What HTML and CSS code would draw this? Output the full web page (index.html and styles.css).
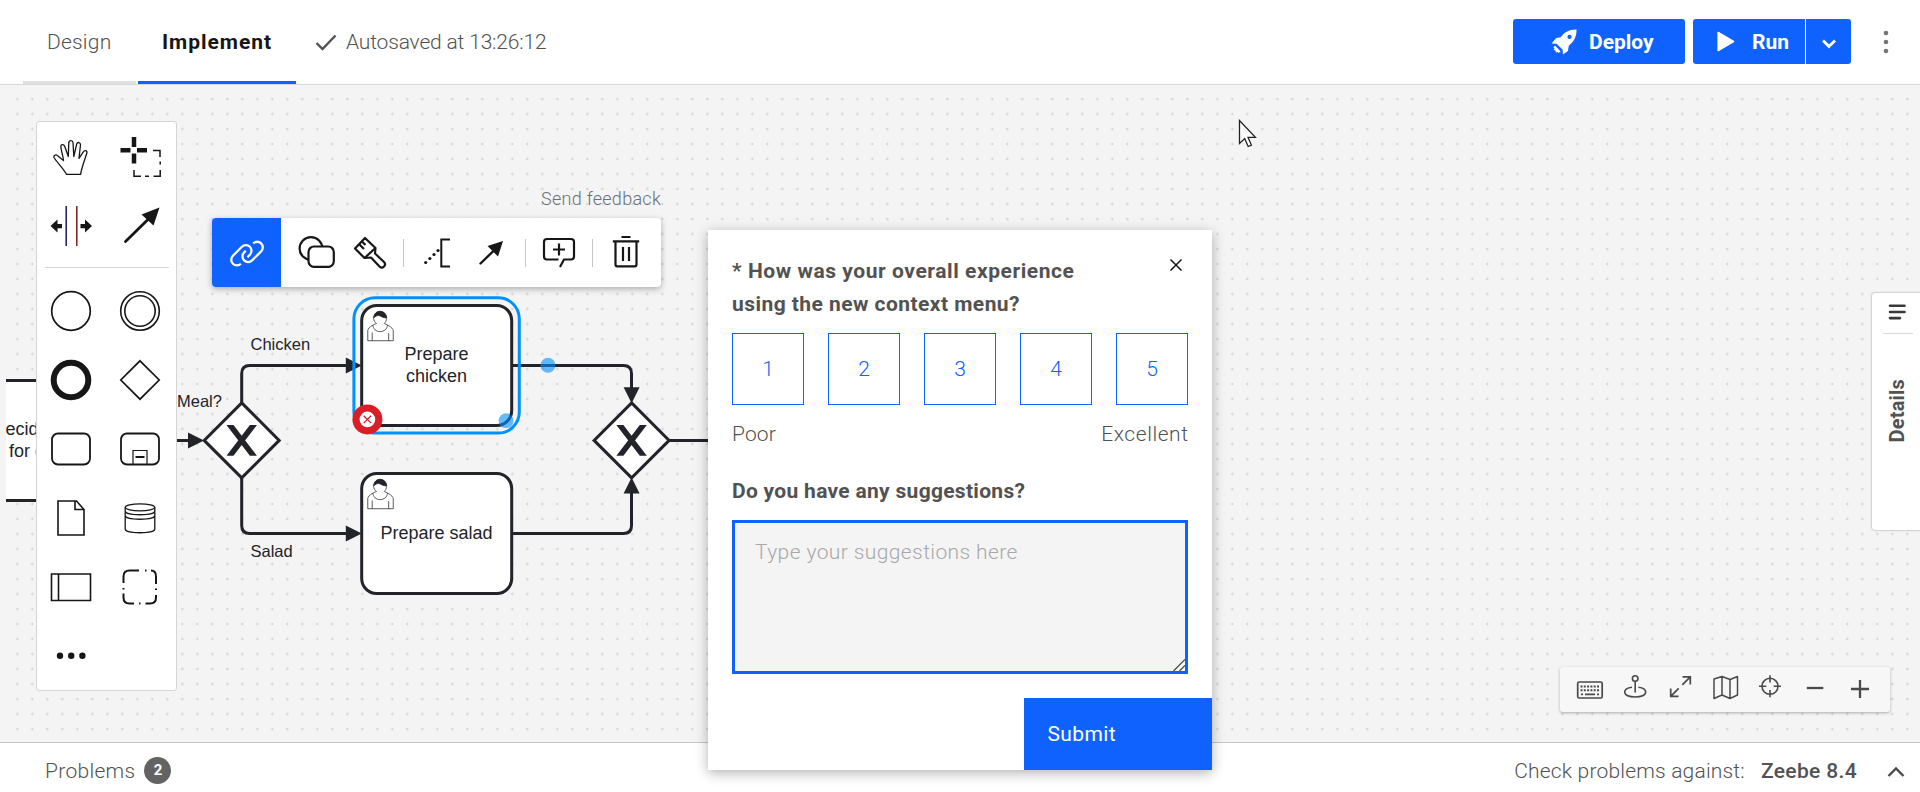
FILE: index.html
```
<!DOCTYPE html>
<html lang="en">
<head>
<meta charset="utf-8">
<title>Modeler</title>
<link rel="stylesheet" href="styles.css">
</head>
<body>
<header class="topbar">
  <nav class="tabs">
    <a class="tab tab-design"><span class="t-design">Design</span></a>
    <a class="tab tab-implement"><span class="t-implement">Implement</span></a>
  </nav>
  <div class="autosave">
    <svg class="check" width="22" height="20" viewBox="0 0 22 20"><path d="M1.5 11 7.5 17 20.500 3.500" fill="none" stroke="#525252" stroke-width="2.4"/></svg>
    <span class="t-autosave">Autosaved at 13:26:12</span>
  </div>
  <div class="actions">
    <button class="btn btn-deploy">
      <svg width="26" height="26" viewBox="0 0 26 26"><path fill="#fff" fill-rule="evenodd" d="M25.500.5C18 .3 13 3.500 9.700 8.300L5.200 9 .6 14.600l5 .2 6.100 6 .2 4.700 5-3.600.9-5.200C23 12.500 25.800 7.500 25.500.5zM18.500 5.800a2.100 2.100 0 1 1 0 4.200 2.100 2.100 0 0 1 0-4.200z"/><path d="M4 16.500 2.400 18.500l1.200 1.200-1.100 1.400 2 .4.500 2.200 1.500-1 1 1.300 2.100-1.500z" fill="#fff"/></svg>
      <span class="t-deploy">Deploy</span>
    </button>
    <div class="split">
      <button class="btn btn-run">
        <svg width="18" height="21" viewBox="0 0 18 21"><path d="M1.200 1.500v18L16.500 10.500z" fill="#fff" stroke="#fff" stroke-width="1.600" stroke-linejoin="round"/></svg>
        <span class="t-run">Run</span>
      </button>
      <button class="btn btn-more"><svg width="16" height="10" viewBox="0 0 16 10"><path d="M2 1.500 8 7.500 14 1.500" fill="none" stroke="#fff" stroke-width="2.800"/></svg></button>
    </div>
    <svg class="kebab" width="6" height="24" viewBox="0 0 6 24" fill="#757575"><circle cx="3" cy="3" r="2.300"/><circle cx="3" cy="12" r="2.300"/><circle cx="3" cy="21" r="2.300"/></svg>
  </div>
</header>

<main class="canvas">
  <svg class="diagram" width="1920" height="657" viewBox="0 85 1920 657">
    <defs>
      <pattern id="dots" x="-5.200" y="91.500" width="15" height="15" patternUnits="userSpaceOnUse"><circle cx="7.500" cy="7.500" r="1.100" fill="#c6c6c6"/></pattern>
      <g id="gateway">
        <path d="M0-37.500 37.500 0 0 37.500-37.500 0z" fill="#fff" stroke="#22242a" stroke-width="3"/>
        <path transform="scale(1.5) translate(-25.140 -24.700)" d="m16 15 7.430 9.710-7.430 9.710h3.430l5.710-7.460 5.710 7.460h3.430l-7.430-9.710 7.430-9.710h-3.430l-5.710 7.460-5.710-7.460z" fill="#22242a" stroke="#22242a" stroke-width="1"/>
      </g>
      <g id="task">
        <rect width="150" height="120" rx="15" fill="#fff" stroke="#22242a" stroke-width="3"/>
        <g transform="scale(1.5)" fill="#fff" stroke="#22242a" stroke-width=".5">
          <path d="m15 12c.909-.845 1.594-2.049 1.594-3.385 0-2.554-1.805-4.622-4.357-4.622-2.552 0-4.288 2.068-4.288 4.622 0 1.348.974 2.562 1.896 3.405-.529.187-5.669 2.097-5.794 4.756v6.718h17v-6.718c0-2.298-5.528-4.595-6.051-4.776zm-8 6v5.500m11 0v-5"/>
          <path d="m17.162 13.009c0 2.447-2.158 4.431-4.821 4.431-2.663 0-4.822-1.981-4.822-4.431"/>
          <path d="m8.100 8.200c0 0 2.251-2.358 4.274-1.177 2.024 1.181 4.221 1.537 4.124.965-.098-.57-.117-3.791-4.191-4.136-3.575.001-4.208 3.367-4.207 4.348z" fill="#22242a"/>
        </g>
      </g>
    </defs>
    <rect x="15" y="92" width="1905" height="650" fill="url(#dots)"/>
    <rect x="6" y="380" width="40" height="120" fill="#fff"/>
    <path d="M6 380.400h40M6 500.400h40" stroke="#22242a" stroke-width="3"/>
    <g class="flows" fill="none" stroke="#22242a" stroke-width="3">
      <path d="M170 440.400h24M241.700 403v-29.500q0-8 8-8H350M241.700 478v47.500q0 8 8 8H350M512 365.500h111.500q8 0 8 8V392M512 533.500h111.500q8 0 8-8V490M669 440.400h60"/>
    </g>
    <path fill="#22242a" d="M188 432.400v16l16-8zM345.800 357.500v16l16-8zM345.800 525.500v16l16-8zM623.600 387.300h16l-8 16zM623.600 493.400h16l-8-16z"/>
    <use href="#gateway" x="241.700" y="440.400"/>
    <use href="#gateway" x="631.600" y="440.400"/>
    <rect x="353.900" y="297.800" width="165.400" height="135.200" rx="21" fill="none" stroke="#0090ff" stroke-width="3"/>
    <use href="#task" x="361.700" y="305.500"/>
    <use href="#task" x="361.700" y="473.500"/>
    <g class="node-text">
      <text x="5.500" y="435">ecide</text>
      <text x="9" y="457">for d</text>
      <text x="436.500" y="360" text-anchor="middle">Prepare</text>
      <text x="436.500" y="382" text-anchor="middle">chicken</text>
      <text x="436.500" y="539" text-anchor="middle">Prepare salad</text>
    </g>
    <g class="flow-text">
      <text x="177" y="407">Meal?</text>
      <text x="250.500" y="350">Chicken</text>
      <text x="250.500" y="557">Salad</text>
    </g>
    <circle cx="506" cy="420.700" r="7.400" fill="#0090ff" opacity=".6"/>
    <circle cx="548" cy="365.200" r="7.500" fill="#0090ff" opacity=".6"/>
    <circle cx="367.400" cy="419.400" r="15" fill="#da1e28"/>
    <circle cx="367.400" cy="419.400" r="7.800" fill="#fff"/>
    <path d="m363.700 415.700 7.400 7.400m0-7.400-7.400 7.400" stroke="#da1e28" stroke-width="1.300"/>
  </svg>

  <aside class="palette">
    <div class="tools">
      <svg viewBox="0 1 46 46"><path d="M18.500 41.400 C15.500 35.500 9 29.500 6 24.500 c-.8-2.600 2.600-3.500 4.200-1.300 l5.300 4.400 c-.3-5-2.500-10-2.700-14.400 .5-2.500 3.300-2 4 .3 l3.500 10 L20.800 9.500 c.6-2.600 3.800-2.400 4.200 0 l.8 14 L28.700 11 c.8-2.300 3.800-1.800 3.800.8 l-1.500 13.500 4.300-6.500 c1.300-2.200 4.300-1.200 3.500 1.400 C36.300 28 33.500 35 32.600 41.400z" fill="none" stroke="#161616" stroke-width="1.300" stroke-linejoin="round"/></svg>
      <svg viewBox="0 1 46 46"><path d="M17 4v10M17 20.500v10M3.500 17.200h10M20 17.200h10" stroke="#161616" stroke-width="4.500"/><path d="M36 17.500h7V24M43.200 28.500v3M43.200 37v6.200H36.500M32 43.200h-4M24 43.200h-7V37" fill="none" stroke="#161616" stroke-width="1.500"/></svg>
      <svg viewBox="0 0 46 46"><path d="M18.200 3v40" stroke="#19195e" stroke-width="1.500"/><path d="M28.800 3v40" stroke="#7a1f1f" stroke-width="1.500"/><path fill="#161616" d="M2.500 23 9.500 16.500V21H14v4.200H9.500v4.300zM44 23 37 16.500V21h-4.500v4.200H37v4.300z"/></svg>
      <svg viewBox="0 0 46 46"><path d="M8.500 38.500 33 14.500" stroke="#161616" stroke-width="2.800" stroke-linecap="round"/><path d="M42.500 4.500 36.500 22.500 24.500 11.500z" fill="#161616"/></svg>
    </div>
    <hr class="palette-rule">
    <div class="shapes">
      <svg viewBox="0 0 46 46"><circle cx="23" cy="23" r="19.300" fill="none" stroke="#161616" stroke-width="1.700"/></svg>
      <svg viewBox="0 0 46 46"><g fill="none" stroke="#161616" stroke-width="1.600"><circle cx="23" cy="23" r="19.300"/><circle cx="23" cy="23" r="15.200"/></g></svg>
      <svg viewBox="0 0 46 46"><circle cx="23" cy="23" r="17.300" fill="none" stroke="#161616" stroke-width="6"/></svg>
      <svg viewBox="0 0 46 46"><path d="M23 3.800 42.200 23 23 42.200 3.800 23z" fill="none" stroke="#161616" stroke-width="1.700"/></svg>
      <svg viewBox="0 0 46 46"><rect x="4" y="7.500" width="38" height="31" rx="6" fill="none" stroke="#161616" stroke-width="1.800"/></svg>
      <svg viewBox="0 0 46 46"><g fill="none" stroke="#161616"><rect x="4" y="7.500" width="38" height="31" rx="6" stroke-width="1.800"/><path d="M16 38V24.500h14V38" stroke-width="1.200"/><path d="M18.500 31h9" stroke-width="2"/></g></svg>
      <svg viewBox="0 0 46 46"><path d="M10 6h18.500l7.500 8.500V40H10zM27 6v8.500h9" fill="none" stroke="#161616" stroke-width="1.600"/></svg>
      <svg viewBox="0 0 46 46"><g fill="none" stroke="#161616" stroke-width="1.300"><ellipse cx="23" cy="12.300" rx="14.800" ry="3.500"/><path d="M8.200 12.300V34c0 5 29.600 5 29.600 0V12.300M8.200 16c0 5 29.600 5 29.600 0M8.200 20.500c0 5 29.600 5 29.600 0"/></g></svg>
      <svg viewBox="0 0 46 46"><path d="M3.500 10h39v26.500h-39zM10.500 10v26.500" fill="none" stroke="#161616" stroke-width="1.600"/></svg>
      <svg viewBox="0 0 46 46"><path d="M22 6.500H12.500q-6 0-6 6V19M6.500 24v1.500M6.500 29.500v4q0 6 6 6h4.500M22 39.500h1.500M28.500 39.500h4.500q6 0 6-6V31M39 26v-1.500M39 20v-7.500q0-6-5-6M29.500 6.500h-1.500" fill="none" stroke="#161616" stroke-width="2"/></svg>
      <svg viewBox="0 0 46 46" fill="#161616"><circle cx="12" cy="22.800" r="3.200"/><circle cx="23.200" cy="22.800" r="3.200"/><circle cx="34.400" cy="22.800" r="3.200"/></svg>
    </div>
  </aside>

  <a class="feedback-link">Send feedback</a>
  <div class="context-pad">
    <span class="pad-link"><svg width="36" height="36" viewBox="0 0 32 32" fill="#fff"><path d="M29.250 6.760a6 6 0 0 0-8.500 0l1.420 1.420a4 4 0 1 1 5.670 5.670l-8 8a4 4 0 1 1-5.670-5.660l1.410-1.420-1.410-1.420-1.420 1.420a6 6 0 0 0 0 8.500A6 6 0 0 0 17 25a6 6 0 0 0 4.270-1.760l8-8a6 6 0 0 0-.020-8.480z"/><path d="M4.190 24.820a4 4 0 0 1 0-5.670l8-8a4 4 0 0 1 5.670 0A3.940 3.940 0 0 1 19 14a4 4 0 0 1-1.170 2.850L15.710 19l1.420 1.420 2.120-2.120a6 6 0 0 0-8.510-8.510l-8 8a6 6 0 0 0 0 8.510A6 6 0 0 0 7 28a6.070 6.070 0 0 0 4.280-1.760l-1.420-1.420a4 4 0 0 1-5.670 0z"/></svg></span>
    <svg class="i-shapes" width="38" height="34" viewBox="0 0 38 34"><g fill="#fff" stroke="#161616" stroke-width="2.200"><circle cx="13" cy="13.500" r="11.400"/><rect x="10.500" y="11.500" width="25.300" height="20.300" rx="5.500"/></g></svg>
    <svg class="i-brush" width="34" height="34" viewBox="0 0 34 34" fill="none" stroke="#161616" stroke-width="2.200" stroke-linejoin="round"><path d="M12 2 22.500 12 22 17.500 31 26c3 3-1.500 7.500-4.500 4.500L18 21.500l-6.500.5L2 12.500z"/><path d="M22.500 12 11.500 22M9 5.500l3.500 3.500M6.500 8.500 11 13M13.500 5.500"/></svg>
    <i class="pad-sep"></i>
    <svg class="i-note" width="30" height="32" viewBox="0 0 30 32"><path d="M27 2.500H18.300V29.500H27" fill="none" stroke="#161616" stroke-width="2"/><g fill="#161616"><circle cx="2.700" cy="25.500" r="1.600"/><circle cx="6.900" cy="21.500" r="1.600"/><circle cx="11" cy="17.500" r="1.600"/><circle cx="15" cy="13.500" r="1.600"/></g></svg>
    <svg class="i-arrow" width="26" height="26" viewBox="0 0 26 26"><path d="M2.500 23.500 18 8.500" stroke="#161616" stroke-width="2.400" stroke-linecap="round"/><path d="M25 1 20 16.500 9.500 6z" fill="#161616"/></svg>
    <i class="pad-sep"></i>
    <svg class="i-comment" width="34" height="32" viewBox="0 0 34 32" fill="none" stroke="#161616" stroke-width="2.200"><path d="M16.500 22.500H5q-3 0-3-3V5q0-3 3-3h24q3 0 3 3v14.500q0 3-3 3h-7l-4 7.500M17 6.500v12M11 12.500h12"/></svg>
    <i class="pad-sep"></i>
    <svg class="i-trash" width="28" height="33" viewBox="0 0 28 33" fill="none" stroke="#161616" stroke-width="2.200"><path d="M9.500 2h9M.8 6.300h26.400M3.500 6.300V29.500q0 1.800 1.800 1.800h17.400q1.800 0 1.800-1.800V6.300M11 12v14M17 12v14"/></svg>
  </div>

  <aside class="details">
    <svg width="18" height="18" viewBox="0 0 18 18" stroke="#393939" stroke-width="2.600" stroke-linecap="round"><path d="M2 2.800h14.500M2 9h14.500M2 15.100h10"/></svg>
    <hr class="details-rule">
    <span class="t-details">Details</span>
  </aside>

  <div class="viewbar">
    <svg width="44" height="44" viewBox="-1.500 0 44 44" fill="none" stroke="#4a4a4a"><rect x="16.200" y="15" width="24.500" height="16" rx="1.500" stroke-width="1.700"/><path d="M19 19.500h18.500M19 23.300h18.500" stroke-width="2" stroke-dasharray="2 1.300"/><path d="M19.500 27.300h2M23.500 27.300h10M35.500 27.300h2" stroke-width="1.700"/></svg>
    <svg width="46" height="44" viewBox="0 0 46 44" fill="none" stroke="#4a4a4a" stroke-width="1.600"><circle cx="31.200" cy="11.500" r="2.800"/><path d="M31.200 14.300V25.500M28 20.300c-10.500 1-10 9.700 3.200 9.700s13.700-8.700 3.200-9.700"/></svg>
    <svg width="44" height="44" viewBox="0 0 44 44" fill="none" stroke="#4a4a4a" stroke-width="1.700"><path d="M32.500 9.800h7.800v7.800M40.300 9.800l-8 8M28.500 29.300h-7.800v-7.800M20.700 29.300l8-8"/></svg>
    <svg width="46" height="44" viewBox="0 0 46 44" fill="none" stroke="#4a4a4a" stroke-width="1.500" stroke-linejoin="round"><path d="m20 12 8-2.500 8 3 7.500-3V28l-7.500 3.500-8-3.500-8 3.500zM28 9.500V28M36 12.500v19"/></svg>
    <svg width="46" height="44" viewBox="0 0 46 44" fill="none" stroke="#4a4a4a" stroke-width="1.600"><circle cx="30" cy="19.300" r="8"/><path d="M30 8.200v7.300M30 23v7.300M19 19.300h7.300M33.700 19.300H41"/></svg>
    <svg width="44" height="44" viewBox="0 0 44 44"><path d="M20.800 21h16.500" stroke="#4a4a4a" stroke-width="2.300"/></svg>
    <svg width="46" height="44" viewBox="0 0 46 44"><path d="M21 22h18M30 13v18" stroke="#4a4a4a" stroke-width="2.300"/></svg>
  </div>

  <svg class="cursor" width="20" height="30" viewBox="0 0 20 30"><path d="M1.500 1.500v23l5.200-5 3.500 8 3.200-1.400-3.400-7.800h7.400z" fill="#fff" stroke="#222" stroke-width="1.300"/></svg>
</main>

<footer class="statusbar">
  <div class="problems"><span class="t-problems">Problems</span><b class="badge">2</b></div>
  <div class="target"><span class="t-check">Check problems against:</span><b class="t-zeebe">Zeebe 8.4</b>
    <svg width="18" height="12" viewBox="0 0 18 12"><path d="M1.500 10 9 2.500 16.500 10" fill="none" stroke="#4a4a4a" stroke-width="2.300"/></svg></div>
</footer>

<section class="survey">
  <div class="survey-body">
    <div class="survey-head">
      <h2><span class="t-q1">* How was your overall experience</span><br><span class="t-q2">using the new context menu?</span></h2>
      <svg class="close" width="14" height="14" viewBox="0 0 14 14"><path d="m1.500 1.500 11 11m0-11-11 11" stroke="#161616" stroke-width="1.500"/></svg>
    </div>
    <div class="scores"><button>1</button><button>2</button><button>3</button><button>4</button><button>5</button></div>
    <div class="scale"><span class="t-poor">Poor</span><span class="t-excellent">Excellent</span></div>
    <h3><span class="t-q3">Do you have any suggestions?</span></h3>
    <div class="suggestion">
      <span class="t-placeholder">Type your suggestions here</span>
      <svg class="grip" width="12" height="12" viewBox="0 0 12 12"><path d="M12 .5.5 12M12 6.500 6.500 12" stroke="#444" stroke-width="1.200"/></svg>
    </div>
  </div>
  <button class="submit"><span class="t-submit">Submit</span></button>
</section>
</body>
</html>
```
FILE: styles.css
```
* { box-sizing: border-box; }
body {
  margin: 0; width: 1920px; height: 792px; overflow: hidden; position: relative;
  display: flex; flex-direction: column;
  font: 300 21px/27px Roboto, "Open Sans", sans-serif; color: #525252; background: #fff;
}
svg { display: block; flex: none; }
button { font: inherit; border: 0; padding: 0; margin: 0; }
h2, h3 { margin: 0; font-size: 21px; font-weight: 700; }
span { white-space: nowrap; }

.topbar { height: 85px; flex: none; display: flex; align-items: stretch; border-bottom: 1px solid #d8d8d8; padding-left: 23px; }
.tabs { display: flex; gap: 2px; }
.tab { display: flex; padding: 29px 0 0 24px; border-bottom: 3px solid #e0e0e0; }
.tab-design { width: 113px; letter-spacing: .2px; }
.tab-implement { width: 158px; border-color: #0f62fe; color: #161616; font-weight: 700; letter-spacing: .95px; }
.autosave { display: flex; gap: 9px; padding: 29px 0 0 19px; letter-spacing: -.17px; }
.check { margin-top: 3px; }
.actions { margin-left: auto; display: flex; padding: 19px 31px 0 0; }
.btn { height: 45px; background: #0f62fe; color: #fff; font-weight: 700; display: flex; align-items: center; }
.btn span { padding-top: 2px; }
.btn-deploy { width: 172px; border-radius: 3px; padding-left: 38px; gap: 12px; margin-right: 8px; }
.split { display: flex; gap: 1px; }
.btn-run { width: 112px; border-radius: 3px 0 0 3px; padding-left: 24px; gap: 17px; }
.btn-more { width: 45px; border-radius: 0 3px 3px 0; justify-content: center; padding-top: 4px; }
.kebab { margin: 11px 0 0 32px; }

.canvas { height: 657px; flex: none; position: relative; background: #f4f4f4; overflow: hidden; }
.node-text { font: 400 18px "Liberation Sans", Arial, sans-serif; fill: #22242a; }
.flow-text { font: 400 16.5px "Liberation Sans", Arial, sans-serif; fill: #22242a; }

.palette { position: absolute; left: 36px; top: 36px; width: 141px; height: 570px; background: #fff; border: 1px solid #d4d4d4; border-radius: 3px; }
.tools, .shapes { display: grid; grid-template-columns: 69px 69px; grid-auto-rows: 69px; place-items: center; margin-left: -1px; }
.tools svg, .shapes svg { width: 46px; height: 46px; }
.palette-rule { border: 0; height: 1px; background: #d8d8d8; margin: 7px 7px 8px 8px; }

.feedback-link { position: absolute; left: 541px; top: 100px; font-size: 18px; letter-spacing: .28px; color: #697077; white-space: nowrap; }
.context-pad { position: absolute; left: 212px; top: 133px; width: 449px; height: 69px; display: flex; align-items: center; background: #fff; border-radius: 4px; box-shadow: 0 2px 6px rgba(0,0,0,.3); }
.pad-link { width: 69px; height: 69px; background: #0f62fe; border-radius: 4px 0 0 4px; display: flex; align-items: center; justify-content: center; }
.pad-sep { width: 1px; height: 28px; background: #c6c6c6; }
.i-shapes { margin: 0 0 2px 17px; }
.i-brush { margin: 0 16px 0 17px; }
.i-note { margin-left: 19px; }
.i-arrow { margin: 0 21px 0 25px; }
.i-comment { margin: 0 16px; }
.i-trash { margin: 0 0 3px 19px; }

.details { position: absolute; left: 1871px; top: 207px; width: 53px; height: 239px; background: #fff; border: 1px solid #d4d4d4; border-radius: 4px; padding: 10px 0 0 16px; box-shadow: 0 0 2px rgba(0,0,0,.1); }
.details-rule { border: 0; height: 1px; width: 30px; margin: 12px 0 45px -5px; background: #d8d8d8; }
.t-details { display: block; margin-left: -2px; writing-mode: vertical-rl; transform: rotate(180deg); font-size: 20px; font-weight: 700; line-height: 22px; letter-spacing: .2px; }

.viewbar { position: absolute; left: 1560px; top: 582px; width: 330px; height: 45px; display: flex; background: #f7f7f7; border-radius: 3px; box-shadow: 0 1px 3px rgba(0,0,0,.3); }
.cursor { position: absolute; left: 1238px; top: 34px; }

.statusbar { height: 50px; flex: none; display: flex; justify-content: space-between; border-top: 1px solid #c6c6c6; padding: 14px 15px 0 45px; }
.problems, .target { display: flex; }
.t-problems, .t-check, .t-zeebe { padding-top: 1px; }
.t-problems { letter-spacing: .3px; }
.t-check { letter-spacing: .19px; }
.badge { width: 27px; height: 27px; border-radius: 50%; background: #636363; color: #fff; font-size: 15px; font-weight: 700; text-align: center; margin-left: 9px; }
.target svg { margin: 9px 0 0 30px; }
.t-zeebe { font-weight: 500; margin-left: 16px; letter-spacing: .35px; }

.survey { position: absolute; left: 708px; top: 230px; width: 504px; height: 540px; background: #fff; box-shadow: 0 3px 12px rgba(0,0,0,.3); display: flex; flex-direction: column; justify-content: space-between; }
.survey-body { padding: 24px 24px 0; }
.survey-head { display: flex; justify-content: space-between; height: 79px; }
h2 { line-height: 33px; padding-top: 1px; }
.t-q1 { letter-spacing: .56px; }
.t-q2 { letter-spacing: .45px; }
.t-q3 { letter-spacing: .3px; }
.close { margin: 4px 5px 0 0; }
.scores { display: flex; justify-content: space-between; }
.scores button { width: 72px; height: 72px; border: 1px solid #0f62fe; background: #fff; color: #0f62fe; }
.scale { display: flex; justify-content: space-between; padding-top: 16px; height: 73px; }
.t-poor { letter-spacing: .15px; }
.t-excellent { letter-spacing: .55px; margin-right: -.5px; }
h3 { height: 42px; }
.suggestion { position: relative; height: 154px; border: 3px solid #0f62fe; background: #f4f4f4; color: #a8a8a8; padding: 16px 20px; letter-spacing: .4px; }
.grip { position: absolute; right: 0; bottom: 0; }
.submit { align-self: flex-end; width: 188px; height: 72px; background: #0f62fe; color: #fff; text-align: left; padding-left: 23.500px; font-weight: 400; letter-spacing: .4px; }
```
